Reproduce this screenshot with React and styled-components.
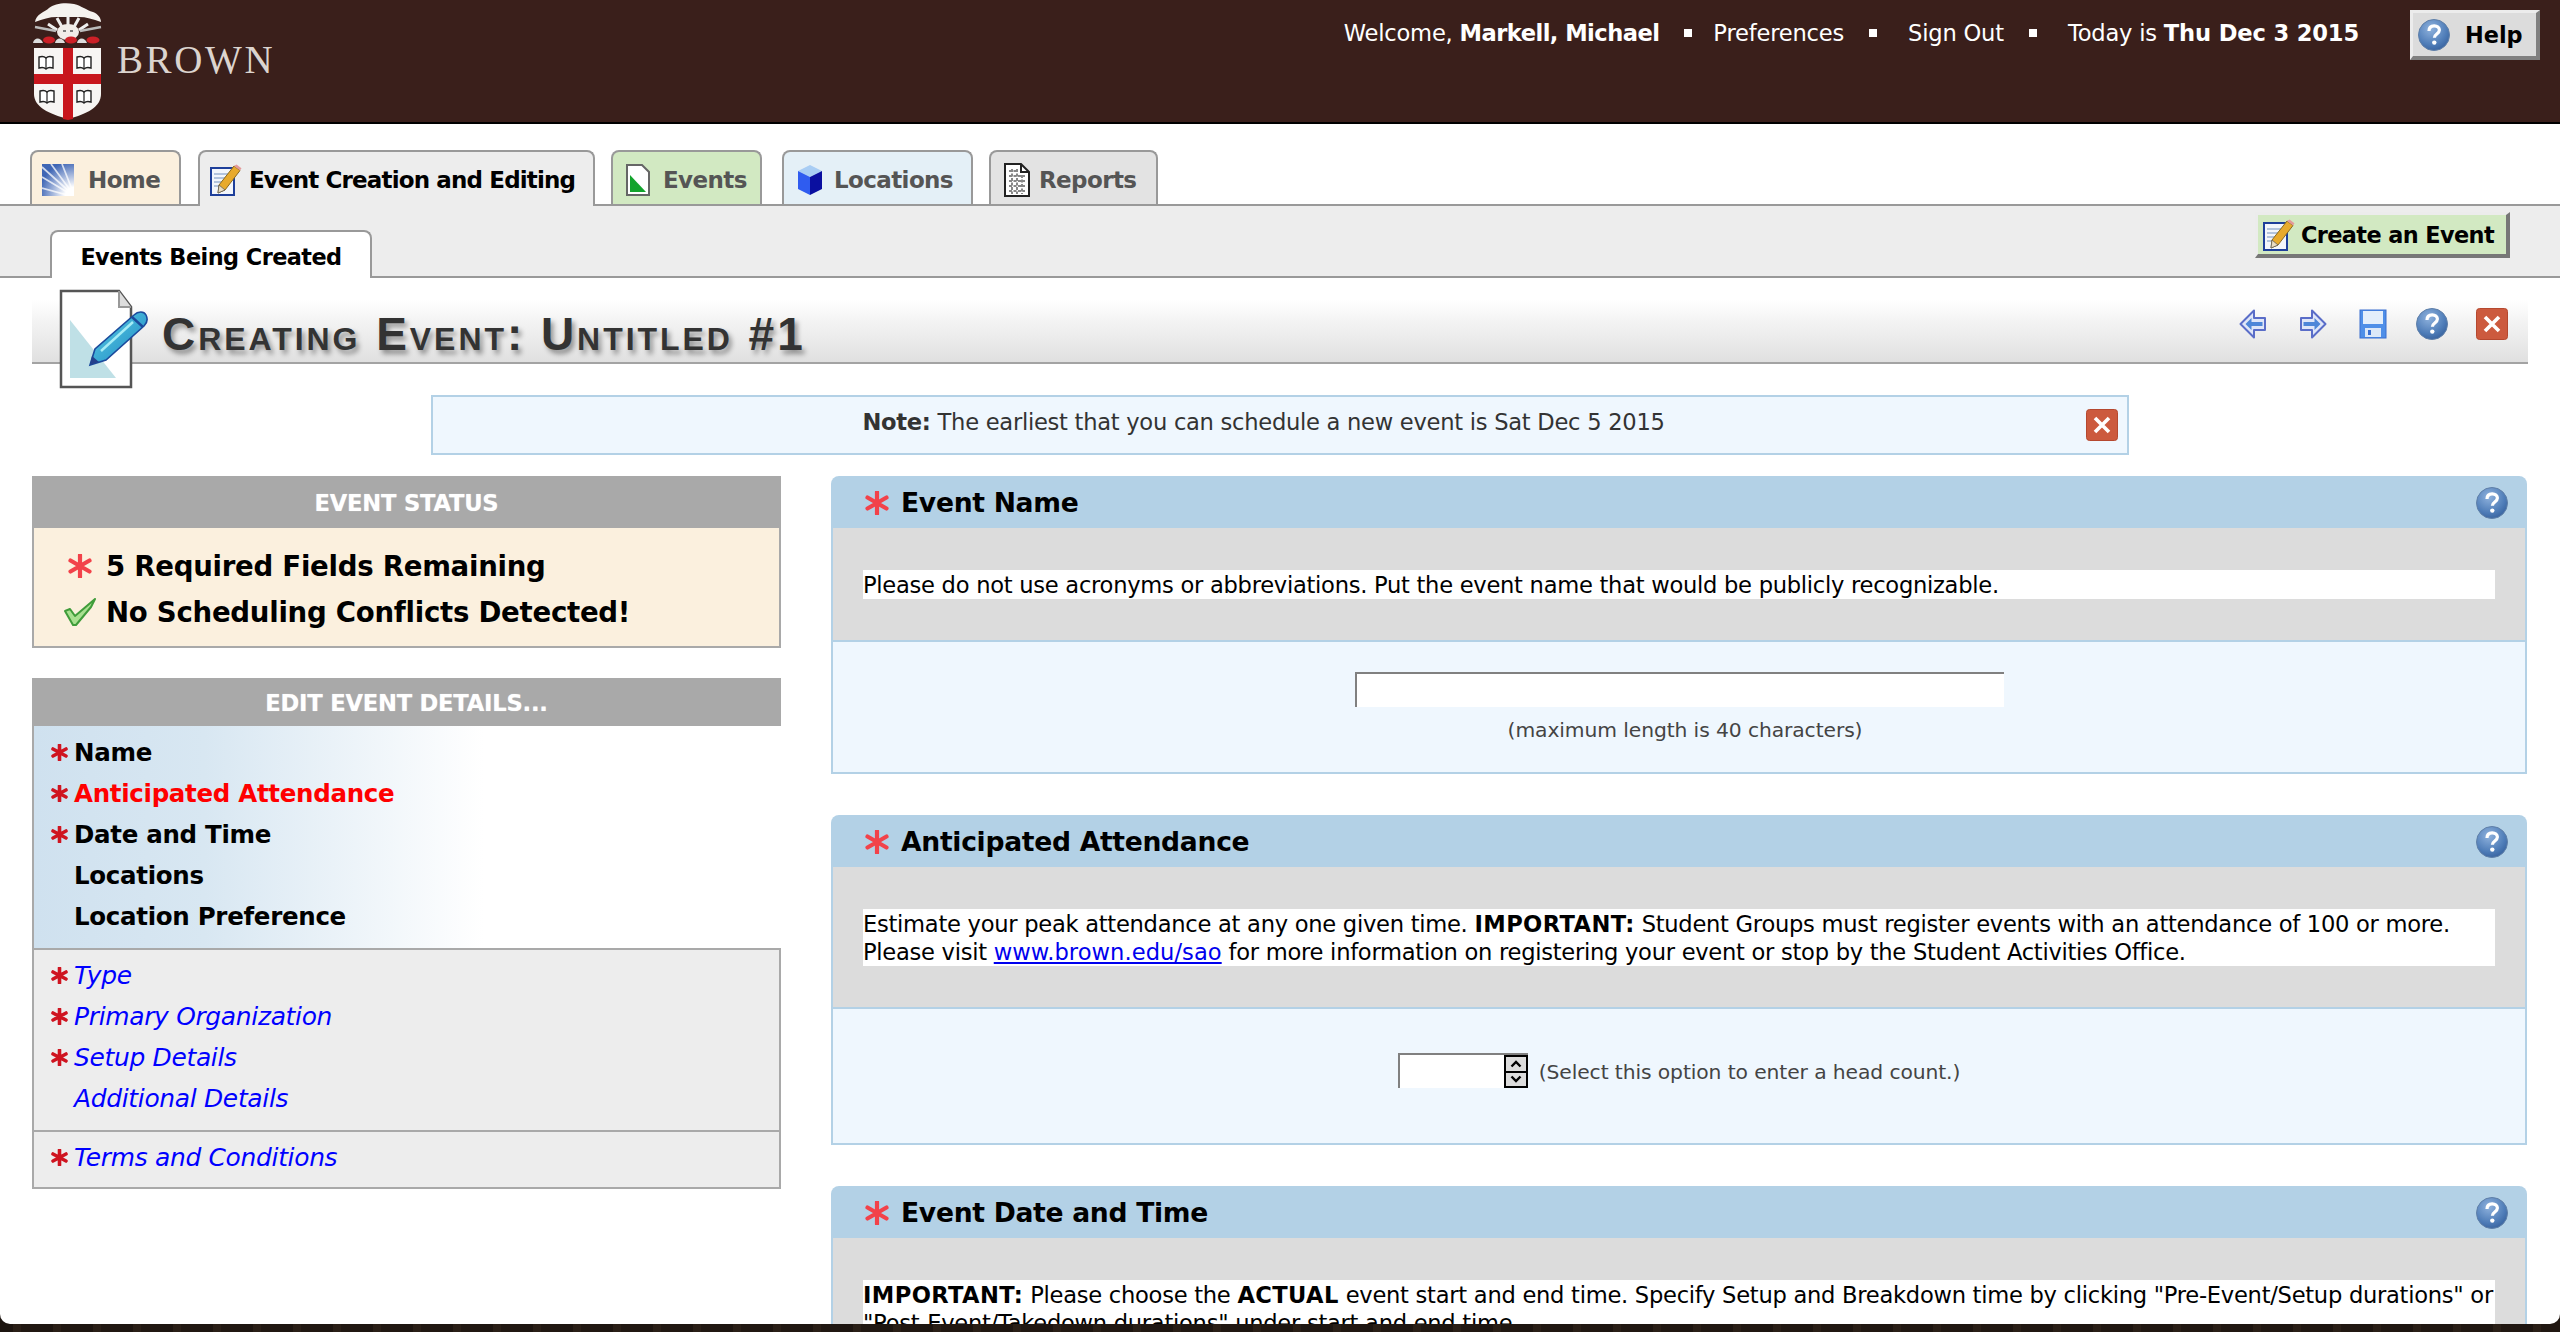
import React from 'react';
import styled, { createGlobalStyle } from 'styled-components';

const GlobalStyle = createGlobalStyle`
  html, body { margin: 0; padding: 0; height: 100%; overflow: hidden; }
  body {
    background: repeating-linear-gradient(90deg, #1d1510 0 13px, #2a1f17 13px 21px, #211812 21px 40px);
    font-family: "DejaVu Sans", Verdana, sans-serif;
    color: #000;
  }
  * { box-sizing: border-box; }
`;

const Page = styled.div`
  width: 2560px; height: 1324px; overflow: hidden;
  background: #fff; border-radius: 0 0 10px 10px;
`;
const Header = styled.header`
  height: 124px; background: #3a1f1b; border-bottom: 2px solid #000;
  display: flex; align-items: flex-start;
`;
const Brand = styled.div`
  display: flex; align-items: flex-start; padding: 2px 0 0 33px;
`;
const Wordmark = styled.span`
  font-family: "Liberation Serif", serif; font-size: 39px; letter-spacing: 2.6px;
  color: #dcd4cf; line-height: 44px; margin: 36px 0 0 14px;
`;
const UserNav = styled.nav`
  margin: 18px 51px 0 auto; display: flex; align-items: center; color: #fff;
  font-size: 22.6px; letter-spacing: -0.2px; line-height: 30px; white-space: nowrap;
`;
const NavBold = styled.b`
  font-weight: 700; letter-spacing: ${p => p.$track}px;
`;
const NavDot = styled.i`
  width: 8px; height: 8px; background: #fff; margin: 0 ${p => p.$right}px 0 25px;
`;
const BevelButton = styled.button`
  display: flex; align-items: center; margin: 0; font: inherit; font-weight: 700;
  color: #000; border-style: solid; border-width: 3px 4px 4px 3px; white-space: nowrap;
  border-color: #ececec #808080 #808080 #ececec;
  background: ${p => p.$bg};
`;
const HelpButton = styled(BevelButton)`
  width: 130px; height: 50px; margin: 10px 20px 0 0; padding: 0 0 0 5px; gap: 15px; font-size: 22.4px;
`;
const CreateButton = styled(BevelButton)`
  width: 255px; height: 46px; margin: 6px 50px 0 0; padding: 1px 0 0 5px; gap: 6px; font-size: 22.4px;
  border-color: #ececec #777 #777 #ececec; letter-spacing: -0.6px;
`;
const TabRow = styled.div`
  height: 82px; padding-left: 30px; display: flex; align-items: flex-end; margin-bottom: -2px;
`;
const Tab = styled.div`
  position: relative; z-index: ${p => (p.$active ? 2 : 0)};
  width: ${p => p.$w}px; height: 56px; margin-right: ${p => p.$gap}px;
  background: ${p => p.$bg}; border: 2px solid #999; border-bottom: 0;
  border-radius: 8px 8px 0 0; display: flex; align-items: center; white-space: nowrap;
  padding: 2px 0 0 ${p => p.$pad}px; gap: ${p => p.$iconGap}px;
  font-weight: 700; font-size: 23px; letter-spacing: ${p => (p.$active ? -0.85 : -0.6)}px;
  color: ${p => (p.$active ? '#000' : '#555')};
`;
const Band = styled.div`
  position: relative; z-index: 1;
  height: 74px; background: #ededed; border-top: 2px solid #999; border-bottom: 2px solid #999;
  display: flex; justify-content: space-between; align-items: flex-start;
`;
const SubTab = styled.div`
  width: 322px; height: 48px; margin: 24px 0 0 50px; background: #fff;
  border: 2px solid #999; border-bottom: 0; border-radius: 8px 8px 0 0;
  display: flex; align-items: center; justify-content: center; padding-top: 3px;
  font-size: 22.4px; font-weight: 700; letter-spacing: -0.55px;
`;
const TitleBar = styled.div`
  position: relative; height: 86px; margin: 0 32px; border-bottom: 2px solid #a3a3a3;
  background: linear-gradient(#fff 22px, #f3f3f3 44px, #e0e0e0 100%);
  display: flex; align-items: flex-start; justify-content: space-between;
`;
const Title = styled.h1`
  margin: 31px 0 0 130px; font-family: "Liberation Sans", Arial, sans-serif; font-size: 46px;
  line-height: 50px; font-weight: 700; font-variant: small-caps; color: #333; letter-spacing: 2.95px;
  text-shadow: 3px 4px 5px rgba(0,0,0,.38);
`;
const DocBadge = styled.div`
  position: absolute; left: 27px; top: 11px;
`;
const TitleActions = styled.div`
  display: flex; align-items: center; margin: 30px 20px 0 0;
`;
const ActionSlot = styled.span`
  display: flex; width: ${p => p.$w}px; height: 32px; align-items: center;
`;
const Note = styled.div`
  width: 1698px; height: 60px; margin: 31px auto 21px; background: #eff7fe;
  border: 2px solid #b3d1e6; display: flex; align-items: center; padding: 0 9px 0 8px;
  font-size: 22.6px; letter-spacing: -0.27px; color: #333;
  b { color: #333; }
`;
const NoteText = styled.div`
  flex: 1; text-align: center; padding-bottom: 6px;
`;
const Columns = styled.div`
  display: flex; align-items: flex-start; gap: 50px; padding-left: 32px;
`;
const Side = styled.aside`
  width: 749px; flex: none;
`;
const SideHead = styled.div`
  height: ${p => p.$h}px; background: #a9a9a9; color: #fff; font-weight: 700; font-size: 22.6px;
  letter-spacing: -0.2px; display: flex; align-items: center; justify-content: center;
  padding-top: 2px; text-shadow: 0 0 1px rgba(255,255,255,.6);
`;
const StatusBody = styled.div`
  height: 120px; background: #fbf0de; border: 2px solid #a9a9a9; border-top: 0;
  margin-bottom: 30px; padding: 15px 0 0 28px;
`;
const StatusLine = styled.div`
  display: flex; align-items: center; height: 46px; font-size: 27.6px; font-weight: 700;
  letter-spacing: -0.27px;
`;
const StatusIcon = styled.span`
  width: 44px; display: flex; justify-content: center; padding-right: 8px;
`;
const PrimaryList = styled.div`
  height: 222px; padding-top: 6px; border-left: 2px solid #a9a9a9;
  background: linear-gradient(90deg, #cfe1ef 0, #d8e7f2 170px, #fff 450px);
`;
const SecondaryList = styled.div`
  background: #ededed; border: 2px solid #a9a9a9; border-top-width: ${p => (p.$noTop ? 0 : 2)}px;
  padding: ${p => p.$pad};
`;
const NavRow = styled.div`
  display: flex; align-items: center; height: 41px; padding-left: 17px;
  font-size: ${p => (p.$link ? 24.9 : 24.5)}px; letter-spacing: -0.3px;
  font-weight: ${p => (p.$link ? 400 : 700)};
  font-style: ${p => (p.$link ? 'italic' : 'normal')};
  color: ${p => (p.$link ? '#0000ff' : p.$active ? '#ff0000' : '#000')};
`;
const StarSlot = styled.span`
  width: 23px; display: flex; flex: none;
`;
const Main = styled.main`
  width: 1696px; flex: none;
`;
const Section = styled.section`
  margin-bottom: 41px;
`;
const SectionHead = styled.div`
  height: 52px; background: #b3d1e6; border-radius: 8px 8px 0 0; display: flex; align-items: center;
  padding: 1px 19px 0 34px; font-size: 26.6px; font-weight: 700; letter-spacing: -0.3px;
`;
const HeadStar = styled.span`
  display: flex; width: 36px;
`;
const HeadLabel = styled.span`
  flex: 1;
`;
const Instructions = styled.div`
  background: #dcdcdc; border: 2px solid #b3d1e6; border-top: 0; padding: 42px 30px 41px;
`;
const WhiteText = styled.div`
  background: #fff; font-size: 22.6px; letter-spacing: -0.27px; padding-top: 1px;
  line-height: 28px; white-space: nowrap;
  a { color: #0000ee; letter-spacing: 0.05px; }
  b { letter-spacing: 0.4px; }
`;
const Field = styled.div`
  background: #eff7fe; border: 2px solid #b3d1e6; border-top: 0;
  height: ${p => p.$h}px; padding-top: ${p => p.$top}px;
  display: flex; flex-direction: column; align-items: center;
`;
const FieldRow = styled.div`
  display: flex; align-items: center;
`;
const TextInput = styled.input`
  width: 649px; height: 35px; border: 0; border-top: 2px solid #808080; border-left: 2px solid #808080;
  background: #fff; padding: 0; margin: 0; display: block;
`;
const Caption = styled.div`
  font-size: 20.3px; letter-spacing: -0.1px; color: #444; margin: ${p => p.$m};
`;
const Spinner = styled.div`
  width: 130px; height: 35px; display: flex; justify-content: flex-end;
  background: #fff; border-top: 2px solid #808080; border-left: 2px solid #808080;
`;
const SpinBox = styled.div`
  width: 24px; height: 33px; background: #000; padding: 2px; display: flex; flex-direction: column; gap: 2px;
`;
const SpinBtn = styled.div`
  flex: 1; background: #dcdcdc; display: flex; align-items: center; justify-content: center;
`;

const HelpIcon = ({ id, w = 32 }) => (
  <svg width={w} height={w} viewBox="0 0 32 32">
    <defs>
      <radialGradient id={id} cx=".4" cy=".3" r=".85">
        <stop offset="0" stopColor="#8fb2dd" /><stop offset=".6" stopColor="#4f7db8" /><stop offset="1" stopColor="#2c5592" />
      </radialGradient>
    </defs>
    <circle cx="16" cy="16" r="15.5" fill={`url(#${id})`} stroke="#5f7fa8" />
    <path d="M11 12c0-3.6 2.4-5.2 5.2-5.2 3 0 5.2 1.7 5.2 4.3 0 3.9-5 4-5 7.6" fill="none" stroke="#fff" strokeWidth="3.2" />
    <circle cx="16.3" cy="23.6" r="2.2" fill="#fff" />
  </svg>
);
const CloseIcon = () => (
  <svg width="32" height="32" viewBox="0 0 32 32">
    <rect x=".5" y=".5" width="31" height="31" rx="3" fill="#cc5a3e" stroke="#b5482f" />
    <path d="M9 9l14 14M23 9L9 23" stroke="#fff" strokeWidth="3.6" />
  </svg>
);
const PencilDoc = ({ w = 32 }) => (
  <svg width={w} height={w} viewBox="0 0 32 32">
    <rect x="1" y="4" width="23" height="27" fill="#f3f6fb" stroke="#1e3f9a" strokeWidth="2" />
    <path d="M4 10h16M4 14h12M4 18h10M4 22h8" stroke="#9fb4d4" strokeWidth="1.5" />
    <path d="M9 21L24 2l6 4.5L15 26l-7 3z" fill="#e8aa2c" stroke="#8a6a20" />
    <path d="M24 2l2.5-1.5 5 3.8L30 6.5z" fill="#e39a9a" />
    <path d="M8 29l1-8 6 5z" fill="#e9dcc0" stroke="#555" strokeWidth=".7" />
  </svg>
);
const SunIcon = () => (
  <svg width="32" height="32" viewBox="0 0 32 32">
    <defs>
      <radialGradient id="sun" cx="1" cy="1" r="1.1"><stop offset=".25" stopColor="#fff" /><stop offset="1" stopColor="#3f66b5" /></radialGradient>
    </defs>
    <rect width="32" height="32" fill="url(#sun)" />
    <path d="M0 3L30 30M9 0L31 30M20 0L31 28M0 13L30 31M0 24L29 32" stroke="#fff" strokeWidth="1.7" opacity=".75" />
  </svg>
);
const EventsIcon = () => (
  <svg width="24" height="32" viewBox="0 0 24 32">
    <path d="M1 1h15l7 7v23H1z" fill="#fff" stroke="#666" strokeWidth="2" />
    <path d="M4 11l16 17H4z" fill="#12a32c" />
  </svg>
);
const CubeIcon = () => (
  <svg width="26" height="32" viewBox="0 0 26 32">
    <path d="M13 1l12 6-12 6L1 7z" fill="#a8cdf4" />
    <path d="M1 7l12 6v18L1 25z" fill="#2f5cf0" />
    <path d="M25 7l-12 6v18l12-6z" fill="#0a0fa0" />
  </svg>
);
const ReportIcon = () => (
  <svg width="26" height="34" viewBox="0 0 26 34">
    <path d="M1 1h16l8 8v24H1z" fill="#fff" stroke="#222" strokeWidth="2" />
    <path d="M17 1v8h8" fill="none" stroke="#222" strokeWidth="2" />
    <path d="M5 8h9M5 13h16M5 18h16M5 23h16M5 28h16M8 6v25M13 6v25M18 12v19" stroke="#888" strokeWidth="2" strokeDasharray="3 1.5" fill="none" />
  </svg>
);
const Arrow = ({ flip }) => (
  <svg width="28" height="30" viewBox="0 0 28 30" style={flip ? { transform: 'scaleX(-1)' } : undefined}>
    <path d="M1.5 15L15 1.5V9h11v12H15v7.5z" fill="#dfe6f8" stroke="#5a6dc8" strokeWidth="2" strokeLinejoin="round" />
    <path d="M6.5 15L12.5 9v4h11v4h-11v4z" fill="#4d86d8" />
  </svg>
);
const SaveIcon = () => (
  <svg width="28" height="30" viewBox="0 0 28 30">
    <rect x="1" y="1" width="26" height="28" fill="#4f8fe8" stroke="#3a6fd0" />
    <rect x="4" y="2" width="20" height="13" fill="#e3eefb" />
    <rect x="6" y="19" width="16" height="9" fill="#dce8f8" />
    <rect x="9" y="21" width="3" height="5" fill="#3a6fd0" />
  </svg>
);
const BigStar = ({ w = 24 }) => (
  <svg width={w} height={w} viewBox="0 0 24 24">
    <path d="M12 1v22M2.5 6.5l19 11M21.5 6.5l-19 11" stroke="#f2424a" strokeWidth="4.2" strokeLinecap="round" />
  </svg>
);
const SmallStar = () => (
  <svg width="17" height="17" viewBox="0 0 17 17">
    <path d="M8.5 1v15M2 5l13 7M15 5L2 12" stroke="#cf1420" strokeWidth="3.6" strokeLinecap="round" />
  </svg>
);
const CheckIcon = () => (
  <svg width="33" height="28" viewBox="0 0 33 28">
    <path d="M1 13l5-2 5 7L31 1l-4 8L12 27h-3z" fill="#a8e090" stroke="#3f9c3a" strokeWidth="2" strokeLinejoin="round" />
  </svg>
);
const BigDoc = () => (
  <svg width="90" height="100" viewBox="0 0 90 100">
    <defs>
      <linearGradient id="pen" x1="0" y1="0" x2="1" y2="1">
        <stop offset="0" stopColor="#5fd0e6" /><stop offset="1" stopColor="#1a86c2" />
      </linearGradient>
    </defs>
    <path d="M2 2h58l12 16v80H2z" fill="#fff" stroke="#555" strokeWidth="2.5" />
    <path d="M60 2v16h12" fill="#ddd" stroke="#999" strokeWidth="2" />
    <path d="M11 31l46 58H11z" fill="#bfe0e6" />
    <path d="M31 76L36 60L75 26C79 22 85 22 87 26C89 30 88 34 85 37L47 71z" fill="url(#pen)" stroke="#1b4a9c" strokeWidth="1.6" />
    <path d="M73 28l11 10" stroke="#1b4a9c" strokeWidth="2.4" />
    <path d="M42 62L74 33" stroke="#a5ecf6" strokeWidth="2.4" />
    <path d="M31 76l2-9 7 6z" fill="#24408c" />
  </svg>
);
const Book = ({ x, y }) => (
  <g transform={`translate(${x} ${y})`}>
    <path d="M0 1c3-1 5-1 7 1 2-2 4-2 7-1v11c-3-1-5-1-7 1-2-2-4-2-7-1z" fill="#fff" stroke="#222" strokeWidth="1.4" />
    <path d="M7 2v11" stroke="#222" strokeWidth="1.2" />
  </g>
);
const Logo = () => (
  <svg width="70" height="118" viewBox="0 0 70 118">
    <path d="M2 20c1-8 10-10 14-14 5-4 15-6 25-4 8 2 12 6 19 8 5 2 8 6 8 10-8-3-15-5-22-5H24C16 15 10 17 2 20z" fill="#f5f2ef" />
    <path d="M35 14v10M24 16l5 9M46 16l-5 9M15 22l9 6M55 22l-9 6" stroke="#eee" strokeWidth="3" />
    <ellipse cx="35" cy="30" rx="11" ry="8" fill="#f1ece8" />
    <path d="M30 29h3M37 29h3" stroke="#555" strokeWidth="1.4" />
    <path d="M2 25l21 4M68 25l-21 4" stroke="#bbb" strokeWidth="2.4" />
    <path d="M0 41c1-6 8-6 10 0zM22 41c1-6 8-6 10 0zM44 41c1-6 8-6 10 0z" fill="#ddd" />
    <ellipse cx="16" cy="38" rx="6" ry="3.6" fill="#cc2027" />
    <ellipse cx="38" cy="38" rx="6" ry="3.6" fill="#cc2027" />
    <ellipse cx="60" cy="38" rx="6.500" ry="3.6" fill="#cc2027" />
    <path d="M1 46h67v46c0 13-14 20-33 25C16 112 1 105 1 92z" fill="#f7f5f3" />
    <path d="M30 46h10v71l-5 1-5-1z" fill="#c8161d" />
    <path d="M1 72h67v10H1z" fill="#c8161d" />
    <Book x="6" y="54" /><Book x="44" y="54" /><Book x="7" y="88" /><Book x="44" y="88" />
  </svg>
);

const Arrows = () => (<SpinBox>
  <SpinBtn><svg width="12" height="8" viewBox="0 0 12 8"><path d="M1.5 6.5L6 2l4.500 4.500" fill="none" stroke="#000" strokeWidth="2.400" /></svg></SpinBtn>
  <SpinBtn><svg width="12" height="8" viewBox="0 0 12 8"><path d="M1.5 1.500L6 6l4.500-4.500" fill="none" stroke="#000" strokeWidth="2.400" /></svg></SpinBtn>
</SpinBox>);

const primary = [
  ['Name', true], ['Anticipated Attendance', true, true], ['Date and Time', true],
  ['Locations', false], ['Location Preference', false],
];
const secondary = [['Type', true], ['Primary Organization', true], ['Setup Details', true], ['Additional Details', false]];

const SecHead = ({ id, children }) => (
  <SectionHead>
    <HeadStar><BigStar /></HeadStar>
    <HeadLabel>{children}</HeadLabel>
    <HelpIcon id={id} />
  </SectionHead>
);

export default function App() {
  return (
    <Page>
      <GlobalStyle />
      <Header>
        <Brand><Logo /><Wordmark>BROWN</Wordmark></Brand>
        <UserNav>
          <span>Welcome, <NavBold $track={-0.55}>Markell, Michael</NavBold></span><NavDot $right={21} />
          <span>Preferences</span><NavDot $right={31} />
          <span>Sign Out</span><NavDot $right={31} />
          <span>Today is <NavBold $track={-0.15}>Thu Dec 3 2015</NavBold></span>
        </UserNav>
        <HelpButton $bg="#dcdcdc"><HelpIcon id="h0" />Help</HelpButton>
      </Header>
      <TabRow>
        <Tab $w={151} $gap={17} $pad={10} $iconGap={14} $bg="#fbf0de"><SunIcon />Home</Tab>
        <Tab $active $w={397} $gap={16} $pad={10} $iconGap={7} $bg="#ededed"><PencilDoc />Event Creation and Editing</Tab>
        <Tab $w={151} $gap={20} $pad={13} $iconGap={13} $bg="#d2e9c2"><EventsIcon />Events</Tab>
        <Tab $w={191} $gap={16} $pad={13} $iconGap={11} $bg="#e4f0f7"><CubeIcon />Locations</Tab>
        <Tab $w={169} $gap={0} $pad={13} $iconGap={9} $bg="#e3e3e3"><ReportIcon />Reports</Tab>
      </TabRow>
      <Band>
        <SubTab>Events Being Created</SubTab>
        <CreateButton $bg="#d2e9c2"><PencilDoc />Create an Event</CreateButton>
      </Band>
      <TitleBar>
        <DocBadge><BigDoc /></DocBadge>
        <Title>Creating Event: Untitled #1</Title>
        <TitleActions>
          <ActionSlot $w={60}><Arrow /></ActionSlot>
          <ActionSlot $w={60}><Arrow flip /></ActionSlot>
          <ActionSlot $w={57}><SaveIcon /></ActionSlot>
          <ActionSlot $w={60}><HelpIcon id="h1" /></ActionSlot>
          <ActionSlot $w={32}><CloseIcon /></ActionSlot>
        </TitleActions>
      </TitleBar>
      <Note>
        <NoteText><b>Note:</b> The earliest that you can schedule a new event is Sat Dec 5 2015</NoteText>
        <CloseIcon />
      </Note>
      <Columns>
        <Side>
          <SideHead $h={52}>EVENT STATUS</SideHead>
          <StatusBody>
            <StatusLine><StatusIcon><BigStar /></StatusIcon>5 Required Fields Remaining</StatusLine>
            <StatusLine><StatusIcon><CheckIcon /></StatusIcon>No Scheduling Conflicts Detected!</StatusLine>
          </StatusBody>
          <SideHead $h={48}>EDIT EVENT DETAILS...</SideHead>
          <PrimaryList>
            {primary.map(([t, star, active]) => (
              <NavRow key={t} $active={active}><StarSlot>{star && <SmallStar />}</StarSlot>{t}</NavRow>
            ))}
          </PrimaryList>
          <SecondaryList $pad="5px 0 11px">
            {secondary.map(([t, star]) => (
              <NavRow key={t} $link><StarSlot>{star && <SmallStar />}</StarSlot>{t}</NavRow>
            ))}
          </SecondaryList>
          <SecondaryList $noTop $pad="5px 0 9px">
            <NavRow $link><StarSlot><SmallStar /></StarSlot>Terms and Conditions</NavRow>
          </SecondaryList>
        </Side>
        <Main>
          <Section>
            <SecHead id="h2">Event Name</SecHead>
            <Instructions>
              <WhiteText>Please do not use acronyms or abbreviations. Put the event name that would be publicly recognizable.</WhiteText>
            </Instructions>
            <Field $h={132} $top={30}>
              <TextInput />
              <Caption $m="11px 0 0 12px">(maximum length is 40 characters)</Caption>
            </Field>
          </Section>
          <Section>
            <SecHead id="h3">Anticipated Attendance</SecHead>
            <Instructions>
              <WhiteText>Estimate your peak attendance at any one given time. <b>IMPORTANT:</b> Student Groups must register events with an attendance of 100 or more.<br />Please visit <a href="#sao">www.brown.edu/sao</a> for more information on registering your event or stop by the Student Activities Office.</WhiteText>
            </Instructions>
            <Field $h={136} $top={44}>
              <FieldRow>
                <Spinner><Arrows /></Spinner>
                <Caption $m="3px 0 0 11px">(Select this option to enter a head count.)</Caption>
              </FieldRow>
            </Field>
          </Section>
          <Section>
            <SecHead id="h4">Event Date and Time</SecHead>
            <Instructions>
              <WhiteText><b>IMPORTANT:</b> Please choose the <b>ACTUAL</b> event start and end time. Specify Setup and Breakdown time by clicking "Pre-Event/Setup durations" or<br />"Post-Event/Takedown durations" under start and end time.</WhiteText>
            </Instructions>
          </Section>
        </Main>
      </Columns>
    </Page>
  );
}
